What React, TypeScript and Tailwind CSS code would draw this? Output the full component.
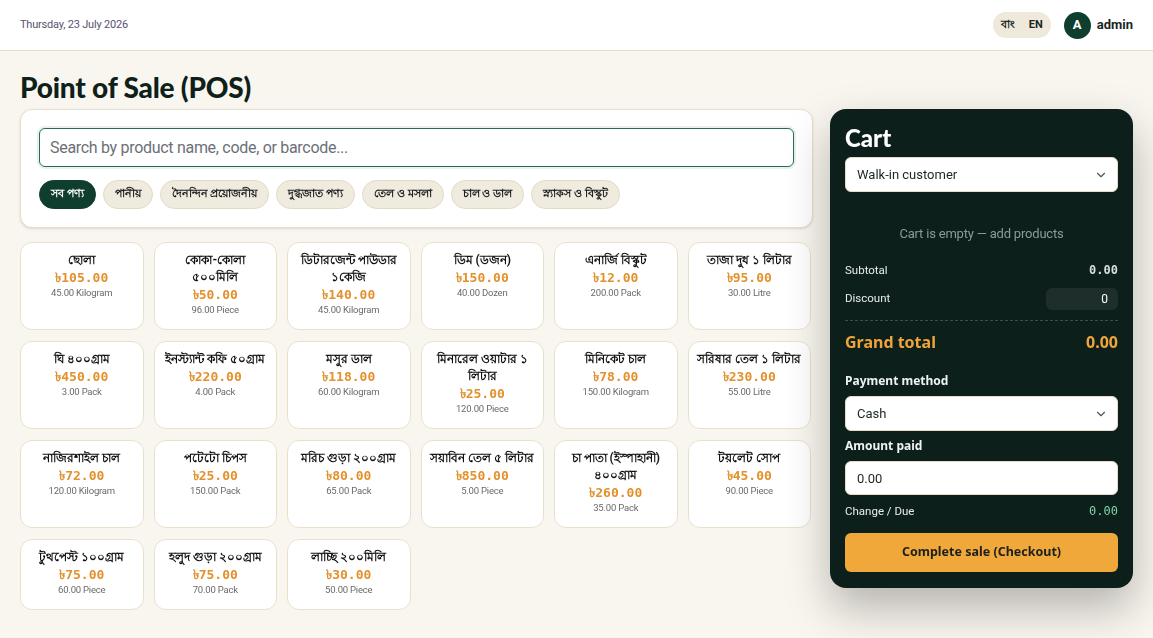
import React, { useState } from 'react';
import { ChevronDown } from 'lucide-react';

type Product = { name: string; price: string; stock: string };

const products: Product[] = [
  { name: 'ছোলা', price: '৳105.00', stock: '45.00 Kilogram' },
  { name: 'কোকা-কোলা ৫০০মিলি', price: '৳50.00', stock: '96.00 Piece' },
  { name: 'ডিটারজেন্ট পাউডার ১কেজি', price: '৳140.00', stock: '45.00 Kilogram' },
  { name: 'ডিম (ডজন)', price: '৳150.00', stock: '40.00 Dozen' },
  { name: 'এনার্জি বিস্কুট', price: '৳12.00', stock: '200.00 Pack' },
  { name: 'তাজা দুধ ১ লিটার', price: '৳95.00', stock: '30.00 Litre' },
  { name: 'ঘি ৪০০গ্রাম', price: '৳450.00', stock: '3.00 Pack' },
  { name: 'ইনস্ট্যান্ট কফি ৫০গ্রাম', price: '৳220.00', stock: '4.00 Pack' },
  { name: 'মসুর ডাল', price: '৳118.00', stock: '60.00 Kilogram' },
  { name: 'মিনারেল ওয়াটার ১ লিটার', price: '৳25.00', stock: '120.00 Piece' },
  { name: 'মিনিকেট চাল', price: '৳78.00', stock: '150.00 Kilogram' },
  { name: 'সরিষার তেল ১ লিটার', price: '৳230.00', stock: '55.00 Litre' },
  { name: 'নাজিরশাইল চাল', price: '৳72.00', stock: '120.00 Kilogram' },
  { name: 'পটেটো চিপস', price: '৳25.00', stock: '150.00 Pack' },
  { name: 'মরিচ গুড়া ২০০গ্রাম', price: '৳80.00', stock: '65.00 Pack' },
  { name: 'সয়াবিন তেল ৫ লিটার', price: '৳850.00', stock: '5.00 Piece' },
  { name: 'চা পাতা (ইস্পাহানী) ৪০০গ্রাম', price: '৳260.00', stock: '35.00 Pack' },
  { name: 'টয়লেট সোপ', price: '৳45.00', stock: '90.00 Piece' },
  { name: 'টুথপেস্ট ১০০গ্রাম', price: '৳75.00', stock: '60.00 Piece' },
  { name: 'হলুদ গুড়া ২০০গ্রাম', price: '৳75.00', stock: '70.00 Pack' },
  { name: 'লাচ্ছি ২০০মিলি', price: '৳30.00', stock: '50.00 Piece' },
];

const categories = [
  'সব পণ্য',
  'পানীয়',
  'দৈনন্দিন প্রয়োজনীয়',
  'দুগ্ধজাত পণ্য',
  'তেল ও মসলা',
  'চাল ও ডাল',
  'স্ন্যাকস ও বিস্কুট',
];

const App: React.FC = () => {
  const [active, setActive] = useState(0);
  const [query, setQuery] = useState('');

  return (
    <div className="min-h-[638px] bg-[#f9f6ef] font-['Roboto',sans-serif] text-[#14231f]">
      {/* top bar */}
      <header className="flex h-[51px] items-center justify-between border-b border-[#e6dcc8] bg-white px-5">
        <span className="text-[11px] tracking-[-0.2px] text-[#585372]">Thursday, 23 July 2026</span>
        <div className="flex items-center gap-[13px]">
          <div className="flex h-[26px] items-center gap-[14px] rounded-full bg-[#efe9dc] px-[8px] text-[11px] font-bold text-[#1b2622]">
            <span>বাং</span>
            <span>EN</span>
          </div>
          <div className="flex items-center gap-[6px]">
            <div className="flex h-[27px] w-[27px] items-center justify-center rounded-full bg-[#0f3d2e] text-[13px] font-bold text-white">
              A
            </div>
            <span className="text-[13px] font-bold text-[#1b2622]">admin</span>
          </div>
        </div>
      </header>

      <main className="px-5 pt-[20px] pb-[30px]">
        <h1 className="mb-[6px] font-['Lato',sans-serif] text-[28px] font-black leading-[32px] tracking-[-0.2px] text-[#0f1f1a]">
          Point of Sale (POS)
        </h1>

        <div className="grid grid-cols-[1fr_303px] items-start gap-[17px]">
          <section>
            <div className="rounded-xl border border-[#e7dfcd] bg-white p-[18px] shadow-sm">
              <input
                value={query}
                onChange={(e) => setQuery(e.target.value)}
                autoFocus
                placeholder="Search by product name, code, or barcode..."
                className="h-[39px] w-full rounded-md border border-[#2a6b53] px-[10px] text-[16px] tracking-[-0.3px] text-[#1b2622] outline-none ring-2 ring-[#2a6b53]/10 placeholder:text-[#6c6f78]"
              />
              <div className="mt-[13px] flex flex-wrap gap-[7px]">
                {categories.map((c, i) => (
                  <button
                    key={c}
                    onClick={() => setActive(i)}
                    className={
                      i === active
                        ? 'h-[29px] rounded-full border border-[#0f3d2e] bg-[#0f3d2e] px-[11px] text-[11px] font-bold text-white'
                        : 'h-[29px] rounded-full border border-[#e3dac6] bg-[#f0ebdf] px-[11px] text-[11px] font-bold text-[#1b1b1b]'
                    }
                  >
                    {c}
                  </button>
                ))}
              </div>
            </div>

            <div className="mt-[14px] grid grid-cols-6 gap-x-[10px] gap-y-[11px] pr-[2px]">
              {products.map((p) => (
                <div
                  key={p.name}
                  className="rounded-xl border border-[#e9e0cc] bg-white px-[7px] pt-[9px] pb-[12px] text-center"
                >
                  <div className="text-[12px] font-bold leading-[17px] text-[#111]">{p.name}</div>
                  <div className="font-['DejaVu_Sans_Mono',monospace] text-[13px] font-semibold leading-[17px] text-[#e3912c]">
                    {p.price}
                  </div>
                  <div className="text-[9.5px] leading-[14px] tracking-[-0.2px] text-[#6a6a6a]">{p.stock}</div>
                </div>
              ))}
            </div>
          </section>

          {/* cart */}
          <aside className="rounded-2xl bg-[#0c1f1b] px-[15px] pt-[15px] pb-[16px] text-white shadow-[0_20px_45px_rgba(0,0,0,0.28)]">
            <h2 className="font-['Lato',sans-serif] text-[24px] font-black leading-[28px]">Cart</h2>

            <div className="relative mt-[5px]">
              <select className="h-[35px] w-full appearance-none rounded-md border border-[#e6dcc8] bg-white px-[11px] text-[13px] text-[#1b2622] outline-none">
                <option>Walk-in customer</option>
              </select>
              <ChevronDown className="pointer-events-none absolute right-[10px] top-[11px] h-[14px] w-[14px] text-[#555]" />
            </div>

            <p className="mt-[34px] text-center text-[13px] leading-4 tracking-[-0.2px] text-[#8d9a96]">
              Cart is empty — add products
            </p>

            <div className="mt-[20px] flex items-center justify-between text-[11.5px] leading-4">
              <span className="text-[#e8ecea]">Subtotal</span>
              <span className="font-['DejaVu_Sans_Mono',monospace] text-[12px] font-bold text-[#d9dedb]">0.00</span>
            </div>
            <div className="mt-[10px] flex items-center justify-between">
              <span className="text-[11.5px] text-[#e8ecea]">Discount</span>
              <input
                defaultValue="0"
                className="h-[22px] w-[72px] rounded-md bg-[#1e2f2b] px-[10px] text-right text-[12px] text-white outline-none"
              />
            </div>

            <div className="mt-[10px] border-t border-dashed border-[#3d4d49]" />

            <div className="mt-[10px] flex items-center justify-between text-[16px] font-bold leading-[22px] text-[#f0a53a]">
              <span className="font-['Noto_Sans',sans-serif]">Grand total</span>
              <span className="font-['Noto_Sans',sans-serif]">0.00</span>
            </div>

            <label className="mt-[20px] block font-['Noto_Sans',sans-serif] text-[12px] font-bold leading-4 text-[#eef2f0]">
              Payment method
            </label>
            <div className="relative mt-[7px]">
              <select className="h-[35px] w-full appearance-none rounded-md border border-[#e6dcc8] bg-white px-[11px] text-[13px] text-[#1b2622] outline-none">
                <option>Cash</option>
                <option>Card</option>
                <option>bKash</option>
              </select>
              <ChevronDown className="pointer-events-none absolute right-[10px] top-[11px] h-[14px] w-[14px] text-[#555]" />
            </div>

            <label className="mt-[7px] block font-['Noto_Sans',sans-serif] text-[12px] font-bold leading-4 text-[#eef2f0]">
              Amount paid
            </label>
            <input
              defaultValue="0.00"
              className="mt-[7px] h-[34px] w-full rounded-md border border-[#e6dcc8] bg-white px-[11px] text-[13px] text-[#1b2622] outline-none"
            />

            <div className="mt-[8px] flex items-center justify-between leading-4">
              <span className="text-[11.5px] text-[#e8ecea]">Change / Due</span>
              <span className="font-['DejaVu_Sans_Mono',monospace] text-[12px] text-[#7fd3a3]">0.00</span>
            </div>

            <button className="mt-[14px] h-[39px] w-full rounded-md bg-[#f0a83a] font-['Noto_Sans',sans-serif] text-[12.5px] font-bold text-[#1c1f1c]">
              Complete sale (Checkout)
            </button>
          </aside>
        </div>
      </main>
    </div>
  );
};

export default App;
